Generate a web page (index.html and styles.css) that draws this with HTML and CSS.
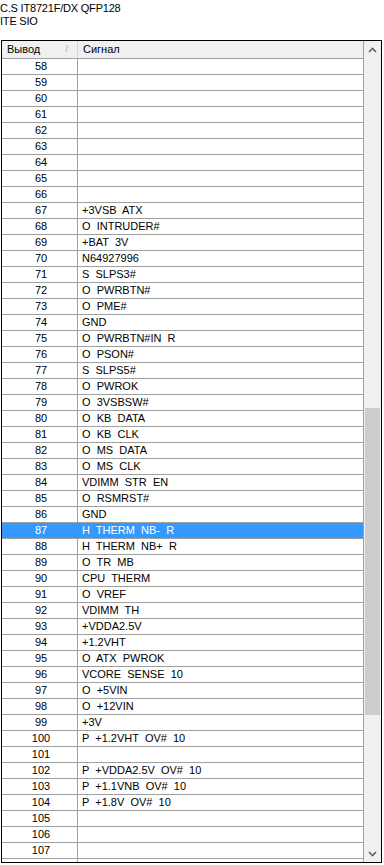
FILE: index.html
```html
<!DOCTYPE html>
<html>
<head>
<meta charset="utf-8">
<link rel="stylesheet" href="styles.css">
</head>
<body>
<div class="title">C.S IT8721F/DX QFP128<br>ITE SIO</div>
<div class="box">
  <div class="main">
    <div class="hdr">
      <div class="hc c1"><span>Вывод</span><span class="sort">/</span></div>
      <div class="hc c2">Сигнал</div>
    </div>
    <div class="rows">
      <div class="row"><div class="n">58</div><div class="s"></div></div>
      <div class="row"><div class="n">59</div><div class="s"></div></div>
      <div class="row"><div class="n">60</div><div class="s"></div></div>
      <div class="row"><div class="n">61</div><div class="s"></div></div>
      <div class="row"><div class="n">62</div><div class="s"></div></div>
      <div class="row"><div class="n">63</div><div class="s"></div></div>
      <div class="row"><div class="n">64</div><div class="s"></div></div>
      <div class="row"><div class="n">65</div><div class="s"></div></div>
      <div class="row"><div class="n">66</div><div class="s"></div></div>
      <div class="row"><div class="n">67</div><div class="s">+3VSB  ATX</div></div>
      <div class="row"><div class="n">68</div><div class="s">O  INTRUDER#</div></div>
      <div class="row"><div class="n">69</div><div class="s">+BAT  3V</div></div>
      <div class="row"><div class="n">70</div><div class="s">N64927996</div></div>
      <div class="row"><div class="n">71</div><div class="s">S  SLPS3#</div></div>
      <div class="row"><div class="n">72</div><div class="s">O  PWRBTN#</div></div>
      <div class="row"><div class="n">73</div><div class="s">O  PME#</div></div>
      <div class="row"><div class="n">74</div><div class="s">GND</div></div>
      <div class="row"><div class="n">75</div><div class="s">O  PWRBTN#IN  R</div></div>
      <div class="row"><div class="n">76</div><div class="s">O  PSON#</div></div>
      <div class="row"><div class="n">77</div><div class="s">S  SLPS5#</div></div>
      <div class="row"><div class="n">78</div><div class="s">O  PWROK</div></div>
      <div class="row"><div class="n">79</div><div class="s">O  3VSBSW#</div></div>
      <div class="row"><div class="n">80</div><div class="s">O  KB  DATA</div></div>
      <div class="row"><div class="n">81</div><div class="s">O  KB  CLK</div></div>
      <div class="row"><div class="n">82</div><div class="s">O  MS  DATA</div></div>
      <div class="row"><div class="n">83</div><div class="s">O  MS  CLK</div></div>
      <div class="row"><div class="n">84</div><div class="s">VDIMM  STR  EN</div></div>
      <div class="row"><div class="n">85</div><div class="s">O  RSMRST#</div></div>
      <div class="row"><div class="n">86</div><div class="s">GND</div></div>
      <div class="row sel"><div class="n">87</div><div class="s">H  THERM  NB-  R</div></div>
      <div class="row"><div class="n">88</div><div class="s">H  THERM  NB+  R</div></div>
      <div class="row"><div class="n">89</div><div class="s">O  TR  MB</div></div>
      <div class="row"><div class="n">90</div><div class="s">CPU  THERM</div></div>
      <div class="row"><div class="n">91</div><div class="s">O  VREF</div></div>
      <div class="row"><div class="n">92</div><div class="s">VDIMM  TH</div></div>
      <div class="row"><div class="n">93</div><div class="s">+VDDA2.5V</div></div>
      <div class="row"><div class="n">94</div><div class="s">+1.2VHT</div></div>
      <div class="row"><div class="n">95</div><div class="s">O  ATX  PWROK</div></div>
      <div class="row"><div class="n">96</div><div class="s">VCORE  SENSE  10</div></div>
      <div class="row"><div class="n">97</div><div class="s">O  +5VIN</div></div>
      <div class="row"><div class="n">98</div><div class="s">O  +12VIN</div></div>
      <div class="row"><div class="n">99</div><div class="s">+3V</div></div>
      <div class="row"><div class="n">100</div><div class="s">P  +1.2VHT  OV#  10</div></div>
      <div class="row"><div class="n">101</div><div class="s"></div></div>
      <div class="row"><div class="n">102</div><div class="s">P  +VDDA2.5V  OV#  10</div></div>
      <div class="row"><div class="n">103</div><div class="s">P  +1.1VNB  OV#  10</div></div>
      <div class="row"><div class="n">104</div><div class="s">P  +1.8V  OV#  10</div></div>
      <div class="row"><div class="n">105</div><div class="s"></div></div>
      <div class="row"><div class="n">106</div><div class="s"></div></div>
      <div class="row"><div class="n">107</div><div class="s"></div></div>
    </div>
  </div>
  <div class="sb">
    <div class="arrow">
      <svg width="9" height="6" viewBox="0 0 9 6"><path d="M1 5 L4.5 1.5 L8 5" fill="none" stroke="#606060" stroke-width="1.6"/></svg>
    </div>
    <div class="track">
      <div class="space-before"></div>
      <div class="thumb"></div>
    </div>
    <div class="arrow">
      <svg width="9" height="6" viewBox="0 0 9 6"><path d="M1 1 L4.5 4.5 L8 1" fill="none" stroke="#606060" stroke-width="1.6"/></svg>
    </div>
  </div>
</div>
</body>
</html>
```

FILE: styles.css
```css
html, body {
  margin: 0;
  padding: 0;
  background: #ffffff;
}
body {
  font-family: "Liberation Sans", Arial, sans-serif;
  font-size: 11px;
  color: #000;
}
.title {
  height: 38px;
  padding-top: 2px;
  line-height: 13px;
  letter-spacing: -0.2px;
}
.box {
  margin-left: 1px;
  width: 381px;
  height: 823px;
  box-sizing: border-box;
  border: 1px solid #000;
  display: flex;
  overflow: hidden;
}
.main {
  width: 362px;
  border-right: 1px solid #a0a0a0;
  box-sizing: border-box;
  display: flex;
  flex-direction: column;
  overflow: hidden;
  background: linear-gradient(to right, transparent 75px, #a0a0a0 75px, #a0a0a0 76px, transparent 76px);
}
.hdr {
  display: grid;
  grid-template-columns: 76px 1fr;
  height: 17px;
  background: #f0f0f0;
  border-bottom: 1px solid #a0a0a0;
  flex: none;
}
.hc {
  line-height: 17px;
  white-space: nowrap;
}
.hdr .c1 {
  display: flex;
  justify-content: space-between;
  padding-left: 5px;
  padding-right: 9px;
  border-right: 1px solid #d5d5d5;
}
.sort {
  color: #a8a8a8;
  font-size: 9px;
}
.hdr .c2 {
  padding-left: 5px;
}
.rows {
  display: flex;
  flex-direction: column;
}
.row {
  display: grid;
  grid-template-columns: 76px 1fr;
  height: 16px;
  box-sizing: border-box;
  border-bottom: 1px solid #a0a0a0;
  line-height: 15px;
  flex: none;
}
.row .n {
  text-align: center;
  padding-left: 3px;
  border-right: 1px solid #a0a0a0;
}
.row .s {
  padding-left: 4px;
  white-space: pre;
}
.row.sel {
  background: #3399ff;
  color: #fff;
}
.row.sel .n {
  border-right-color: #3399ff;
}
.sb {
  width: 17px;
  background: #f0f0f0;
  display: flex;
  flex-direction: column;
}
.arrow {
  height: 17px;
  display: flex;
  align-items: center;
  justify-content: center;
  flex: none;
}
.track {
  flex: 1;
  display: flex;
  flex-direction: column;
}
.space-before {
  height: 350px;
}
.thumb {
  height: 307px;
  margin: 0 1px;
  background: #cdcdcd;
}
```
